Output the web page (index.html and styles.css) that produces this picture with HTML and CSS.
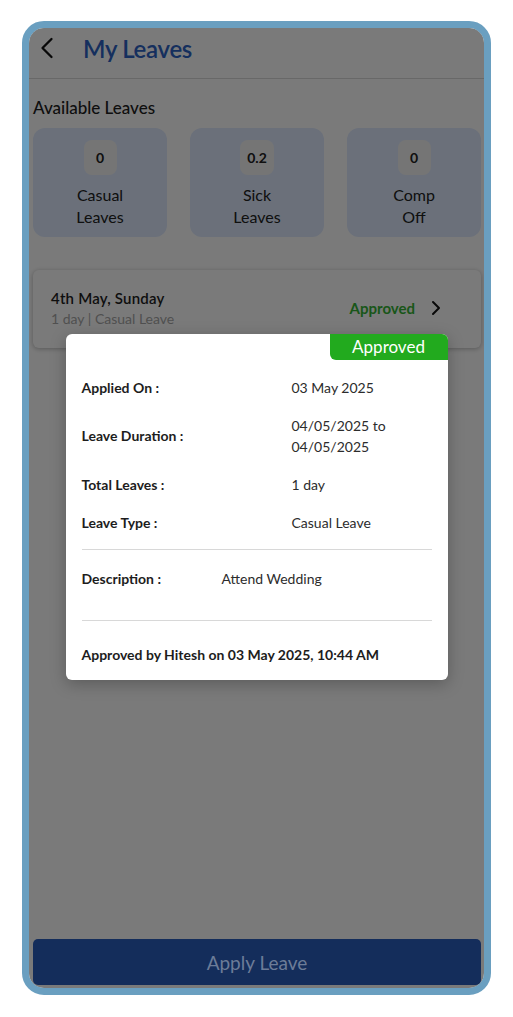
FILE: index.html
```html
<!DOCTYPE html>
<html lang="en">
<head>
<meta charset="utf-8">
<title>My Leaves</title>
<link rel="stylesheet" href="styles.css">
</head>
<body>
<div class="frame">
  <div class="screen">
    <header class="topbar">
      <span class="back">
        <svg width="14" height="22" viewBox="0 0 14 22"><polyline points="11.5,2 2.5,11 11.5,20" fill="none" stroke="#111" stroke-width="2.3" stroke-linecap="round" stroke-linejoin="round"/></svg>
      </span>
      <h1 class="title">My Leaves</h1>
    </header>

    <main class="content">
      <h2 class="section-title">Available Leaves</h2>
      <div class="balances">
        <div class="balance-card">
          <div class="count">0</div>
          <div class="label">Casual<br>Leaves</div>
        </div>
        <div class="balance-card">
          <div class="count">0.2</div>
          <div class="label">Sick<br>Leaves</div>
        </div>
        <div class="balance-card">
          <div class="count">0</div>
          <div class="label">Comp<br>Off</div>
        </div>
      </div>

      <div class="leave-item">
        <div class="leave-info">
          <div class="leave-date">4th May, Sunday</div>
          <div class="leave-meta">1 day | Casual Leave</div>
        </div>
        <div class="leave-status">Approved</div>
        <span class="leave-chevron">
          <svg width="10" height="16" viewBox="0 0 10 16"><polyline points="2,2 8,8 2,14" fill="none" stroke="#111" stroke-width="2" stroke-linecap="round" stroke-linejoin="round"/></svg>
        </span>
      </div>
    </main>

    <div class="overlay">
      <div class="modal">
        <div class="badge-row"><span class="badge">Approved</span></div>
        <div class="details">
          <div class="row"><span class="key">Applied On :</span><span class="val">03 May 2025</span></div>
          <div class="row"><span class="key">Leave Duration :</span><span class="val">04/05/2025 to<br>04/05/2025</span></div>
          <div class="row"><span class="key">Total Leaves :</span><span class="val">1 day</span></div>
          <div class="row"><span class="key">Leave Type :</span><span class="val">Casual Leave</span></div>
        </div>
        <hr class="divider">
        <div class="row desc"><span class="key">Description :</span><span class="val">Attend Wedding</span></div>
        <hr class="divider">
        <p class="approved-by">Approved by Hitesh on 03 May 2025, 10:44 AM</p>
      </div>
    </div>

    <footer class="footer">
      <button class="apply-btn">Apply Leave</button>
    </footer>
  </div>
</div>
</body>
</html>
```

FILE: styles.css
```css
* { box-sizing: border-box; }

html, body {
  margin: 0;
  padding: 0;
  background: #ffffff;
  font-family: Lato, "Open Sans", "Liberation Sans", sans-serif;
}

.frame {
  margin: 21px 0 0 22px;
  width: 469px;
  height: 974px;
  border: 7px solid #6a9fc0;
  border-radius: 22px;
  overflow: hidden;
  background: #ffffff;
}

.screen {
  position: relative;
  height: 100%;
  display: flex;
  flex-direction: column;
  border-radius: 14px;
  overflow: hidden;
}

.topbar {
  height: 51px;
  flex: none;
  display: flex;
  align-items: center;
  padding: 0 0 10px 11px;
  border-bottom: 1px solid #dadada;
}

.back {
  display: flex;
  width: 14px;
}

.title {
  margin: 0 0 0 29px;
  font-size: 24px;
  font-weight: 600;
  color: #2c62c4;
  letter-spacing: -0.3px;
}

.content {
  flex: 1;
  padding: 0 3px 0 4px;
}

.section-title {
  margin: 18px 0 0 0;
  font-size: 17px;
  font-weight: 500;
  color: #202020;
  line-height: 22px;
}

.balances {
  display: grid;
  grid-template-columns: repeat(3, 134px);
  gap: 23px;
  margin-top: 9px;
}

.balance-card {
  height: 109px;
  background: #dfeaff;
  border-radius: 12px;
  display: flex;
  flex-direction: column;
  align-items: center;
  padding-top: 12px;
}

.count {
  min-width: 33px;
  height: 35px;
  padding: 0 7px;
  border-radius: 8px;
  background: #f5f5f5;
  display: flex;
  align-items: center;
  justify-content: center;
  font-size: 14px;
  font-weight: 700;
  color: #222;
}

.label {
  margin-top: 9px;
  font-size: 16px;
  line-height: 22px;
  text-align: center;
  color: #222;
}

.leave-item {
  margin-top: 33px;
  height: 78px;
  background: #ffffff;
  border-radius: 6px;
  box-shadow: 0 1px 5px rgba(0, 0, 0, 0.28);
  display: flex;
  align-items: center;
  padding: 0 0 2px 18px;
}

.leave-info { flex: 1; }

.leave-date {
  font-size: 15px;
  font-weight: 600;
  color: #1e1e1e;
  line-height: 20px;
  letter-spacing: 0.2px;
}

.leave-meta {
  margin-top: 2px;
  font-size: 14px;
  color: #a8a8a8;
  line-height: 18px;
}

.leave-status {
  font-size: 15px;
  font-weight: 700;
  color: #36b536;
}

.leave-chevron {
  display: flex;
  margin: 0 40px 0 16px;
}

.overlay {
  position: absolute;
  inset: 0;
  background: rgba(0, 0, 0, 0.52);
  display: flex;
  align-items: center;
  justify-content: center;
  z-index: 1;
  padding-bottom: 3px;
}

.modal {
  width: 382px;
  background: #ffffff;
  border-radius: 6px;
  padding: 0 16px 15px 16px;
  color: #222;
  font-size: 14px;
  box-shadow: 0 4px 16px rgba(0, 0, 0, 0.25);
}

.badge-row {
  display: flex;
  justify-content: flex-end;
  margin-right: -16px;
}

.badge {
  width: 118px;
  height: 26px;
  background: #22aa1e;
  color: #ffffff;
  font-size: 17px;
  line-height: 26px;
  text-align: center;
  border-radius: 0 6px 0 6px;
}

.details {
  margin-top: 17px;
  display: flex;
  flex-direction: column;
  gap: 17px;
}

.row {
  display: grid;
  grid-template-columns: 210px 1fr;
  align-items: center;
  line-height: 21px;
}

.key {
  font-weight: 700;
  color: #1d1d1d;
}

.val {
  color: #2c2c2c;
}

.row.desc {
  grid-template-columns: 140px 1fr;
  margin: 18px 0 31px 0;
}

.divider {
  margin: 16px 0 0 0;
  border: 0;
  border-top: 1px solid #d8d8d8;
  height: 0;
}

.row.desc + .divider { margin-top: 0; }

.approved-by {
  margin: 23px 0 0 0;
  font-weight: 700;
  line-height: 21px;
  color: #1d1d1d;
}

.footer {
  flex: none;
  padding: 0 3px 3px 4px;
  position: relative;
  z-index: 2;
}

.apply-btn {
  display: block;
  width: 100%;
  height: 46px;
  border: 0;
  border-radius: 5px;
  background: #142d5b;
  color: #6c7c98;
  font-family: Lato, "Open Sans", "Liberation Sans", sans-serif;
  font-size: 19px;
}
```
